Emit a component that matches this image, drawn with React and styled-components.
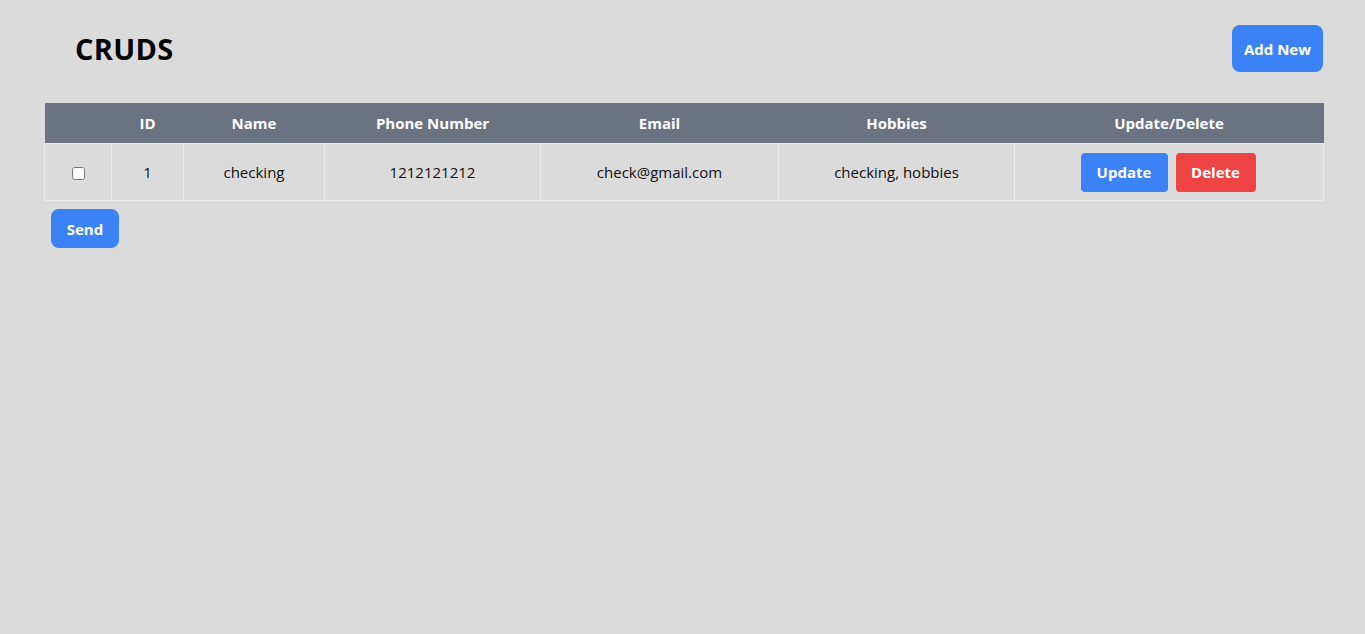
import React from 'react';
import styled, { createGlobalStyle } from 'styled-components';

const GlobalStyle = createGlobalStyle`
  html, body {
    margin: 0;
    padding: 0;
    background: #dbdbdb;
    font-family: "Open Sans", "Noto Sans", sans-serif;
    color: #111;
  }
`;

const Page = styled.div`
  min-height: 634px;
  background: #dbdbdb;
  padding: 25px 42px 0 44px;
  box-sizing: border-box;
`;

const Header = styled.header`
  display: flex;
  align-items: center;
  justify-content: space-between;
  padding-left: 31px;
  margin-bottom: 31px;
`;

const Title = styled.h1`
  margin: 0;
  font-size: 29px;
  font-weight: 700;
  color: #000;
  letter-spacing: 0.3px;
`;

const Button = styled.button`
  font-family: inherit;
  font-weight: 700;
  font-size: 15px;
  color: #fff;
  border: none;
  cursor: pointer;
  background: ${(p) => (p.$variant === 'danger' ? '#ef4444' : '#3b82f6')};
  border-radius: ${(p) => (p.$small ? '4px' : '8px')};
  height: ${(p) => p.$h || 39}px;
  width: ${(p) => p.$w}px;
  padding: 0;
`;

const Table = styled.table`
  width: 100%;
  border-collapse: collapse;
  table-layout: fixed;
`;

const Th = styled.th`
  background: #6b7280;
  color: #fff;
  font-size: 15px;
  font-weight: 700;
  height: 40px;
  padding: 0;
  text-align: center;
`;

const Td = styled.td`
  height: 56px;
  padding: 0;
  text-align: center;
  font-size: 15px;
  color: #111;
  border: 1px solid #ebebeb;
`;

const Actions = styled.div`
  display: flex;
  justify-content: center;
  gap: 8px;
  padding-right: 2px;
`;

const Check = styled.input`
  width: 13px;
  height: 13px;
  margin: 0;
  vertical-align: middle;
`;

const Footer = styled.div`
  padding: 8px 0 0 7px;
`;

const columns = [67, 72, 141, 216, 238, 236, 309];

const rows = [
  { id: 1, name: 'checking', phone: '1212121212', email: 'check@gmail.com', hobbies: 'checking, hobbies' },
];

export default function App() {
  return (
    <>
      <GlobalStyle />
      <Page>
        <Header>
          <Title>CRUDS</Title>
          <Button $w={91} $h={47}>Add New</Button>
        </Header>
        <Table>
          <colgroup>
            {columns.map((w, i) => (
              <col key={i} style={{ width: w }} />
            ))}
          </colgroup>
          <thead>
            <tr>
              <Th />
              <Th>ID</Th>
              <Th>Name</Th>
              <Th>Phone Number</Th>
              <Th>Email</Th>
              <Th>Hobbies</Th>
              <Th>Update/Delete</Th>
            </tr>
          </thead>
          <tbody>
            {rows.map((r) => (
              <tr key={r.id}>
                <Td>
                  <Check type="checkbox" />
                </Td>
                <Td>{r.id}</Td>
                <Td>{r.name}</Td>
                <Td>{r.phone}</Td>
                <Td>{r.email}</Td>
                <Td>{r.hobbies}</Td>
                <Td>
                  <Actions>
                    <Button $small $w={87}>Update</Button>
                    <Button $small $variant="danger" $w={80}>Delete</Button>
                  </Actions>
                </Td>
              </tr>
            ))}
          </tbody>
        </Table>
        <Footer>
          <Button $w={68}>Send</Button>
        </Footer>
      </Page>
    </>
  );
}
